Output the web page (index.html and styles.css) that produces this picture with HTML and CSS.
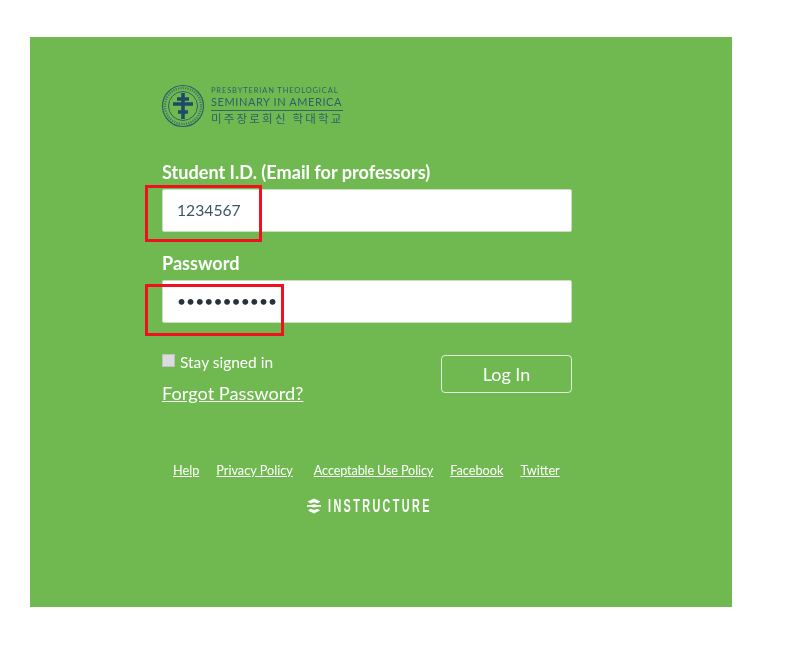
FILE: index.html
```html
<!DOCTYPE html>
<html lang="en">
<head>
<meta charset="utf-8">
<title>Log In</title>
<link rel="stylesheet" href="styles.css">
</head>
<body>
<main class="panel">
  <div class="logo">
    <svg class="seal" width="44" height="44" viewBox="0 0 44 44" aria-hidden="true">
      <circle cx="22" cy="22" r="20.5" fill="none" stroke="#2f5f68" stroke-width="1.2"/>
      <circle cx="22" cy="22" r="18" fill="none" stroke="#3f7a63" stroke-width="2.4" stroke-dasharray="1.2 1.2"/>
      <circle cx="22" cy="22" r="14.5" fill="none" stroke="#2f5f68" stroke-width="1"/>
      <path d="M22 9v26M12 20h20M16 15h12M17 28h10" fill="none" stroke="#1f4a66" stroke-width="3.6"/>
    </svg>
    <div class="logo-text">
      <div class="logo-small">PRESBYTERIAN THEOLOGICAL</div>
      <div class="logo-large">SEMINARY IN AMERICA</div>
      <div class="logo-korean">미주장로회신 학대학교</div>
    </div>
  </div>

  <form class="form">
    <label class="label" for="uid">Student I.D. (Email for professors)</label>
    <input class="field field-id" id="uid" type="text" value="1234567">
    <label class="label label-pass" for="pw">Password</label>
    <input class="field field-pass" id="pw" type="password" value="12345678901">
    <div class="actions">
      <div class="remember">
        <div class="stay"><span class="check"></span><span>Stay signed in</span></div>
        <a class="forgot" href="#">Forgot Password?</a>
      </div>
      <button class="login" type="button">Log In</button>
    </div>
  </form>

  <nav class="links">
    <a href="#">Help</a>
    <a href="#">Privacy Policy</a>
    <a class="wide" href="#">Acceptable Use Policy</a>
    <a href="#">Facebook</a>
    <a href="#">Twitter</a>
  </nav>
  <div class="brand">
    <svg width="16" height="16" viewBox="0 0 16 16" aria-hidden="true">
      <path d="M8 0.500L14.500 3.500 11.500 5.500 8 4.300 4.500 5.500 1.500 3.500Z M1 7h4l3-.8 3 .8h4v1.800h-4l-3 .8-3-.8H1Z M4.500 10.800 8 12l3.500-1.200 2.500 1.600L8 15.500 2 12.400Z" fill="#fff"/>
    </svg>
    <span class="brand-name">INSTRUCTURE</span>
  </div>

  <div class="mark mark-id"></div>
  <div class="mark mark-pass"></div>
</main>
</body>
</html>
```
FILE: styles.css
```css
html, body {
  margin: 0;
  background: #fff;
}
body {
  padding: 37px 0 0 30px;
  font-family: Lato, "Liberation Sans", sans-serif;
}
.panel {
  position: relative;
  box-sizing: border-box;
  width: 702px;
  height: 570px;
  padding: 47px 0 0 132px;
  background: #70b951;
  color: #fff;
}
.logo {
  display: flex;
  align-items: center;
  gap: 4px;
  height: 44px;
  margin-left: -1px;
  filter: blur(0.6px);
}
.logo-text {
  width: 132px;
  margin-left: 2px;
  color: #2f5f68;
}
.logo-small {
  font-size: 7.500px;
  line-height: 9px;
  letter-spacing: 0.870px;
  white-space: nowrap;
}
.logo-large {
  font-size: 11px;
  line-height: 13.200px;
  letter-spacing: 0.580px;
  white-space: nowrap;
  border-bottom: 1px solid #2f6a5c;
  padding-bottom: 1px;
}
.logo-korean {
  font-family: "Noto Sans CJK KR", sans-serif;
  font-size: 11.500px;
  line-height: 15px;
  letter-spacing: 2.200px;
  white-space: nowrap;
}
.form {
  width: 410px;
  margin-top: 34px;
  filter: blur(0.4px);
}
.label {
  display: block;
  font-size: 18.100px;
  font-weight: 700;
  line-height: 20px;
  white-space: nowrap;
}
.label-pass {
  margin-top: 21px;
}
.field {
  display: block;
  box-sizing: border-box;
  width: 410px;
  height: 43px;
  margin-top: 7px;
  padding: 0 14px 2px;
  border: 1px solid #c9dfc0;
  border-radius: 2px;
  background: #fff;
  color: #3f5560;
  font-family: Lato, "Liberation Sans", sans-serif;
  font-size: 15.700px;
  outline: none;
}
.field-pass {
  color: #27323a;
}
.actions {
  display: flex;
  justify-content: space-between;
  align-items: flex-start;
  margin-top: 29px;
}
.remember {
  display: flex;
  flex-direction: column;
}
.stay {
  display: flex;
  align-items: center;
  gap: 5px;
  height: 20px;
  font-size: 15.500px;
}
.check {
  width: 13px;
  height: 13px;
  margin-top: -4px;
  background: #dcdce0;
  border: 1px solid #bcc4c0;
  box-sizing: border-box;
}
.forgot {
  margin-top: 10px;
  color: #fff;
  font-size: 18.200px;
  line-height: 22px;
}
.login {
  box-sizing: border-box;
  width: 131px;
  height: 38px;
  margin-top: 3px;
  border: 1px solid #e0efd9;
  border-radius: 4px;
  background: transparent;
  color: #fff;
  font-family: Lato, "Liberation Sans", sans-serif;
  font-size: 18px;
}
.links {
  display: flex;
  gap: 17px;
  width: 410px;
  margin-top: 57px;
  padding-left: 11px;
  font-size: 12.700px;
  line-height: 18px;
  filter: blur(0.4px);
}
.links a {
  color: #fff;
  white-space: nowrap;
}
.links .wide {
  margin-left: 4px;
  letter-spacing: -0.150px;
}
.brand {
  display: flex;
  align-items: center;
  gap: 6px;
  width: 410px;
  margin-top: 18px;
  padding-left: 144px;
  height: 18px;
  filter: blur(0.4px);
}
.brand-name {
  font-family: "Liberation Sans", sans-serif;
  font-size: 18px;
  font-weight: 700;
  letter-spacing: 4px;
  white-space: nowrap;
  transform: scaleX(0.6);
  transform-origin: left center;
}
.mark {
  position: absolute;
  box-sizing: border-box;
  border: 3px solid #f01020;
}
.mark-id {
  left: 115px;
  top: 148px;
  width: 117px;
  height: 57px;
}
.mark-pass {
  left: 115px;
  top: 247px;
  width: 139px;
  height: 52px;
}
```
